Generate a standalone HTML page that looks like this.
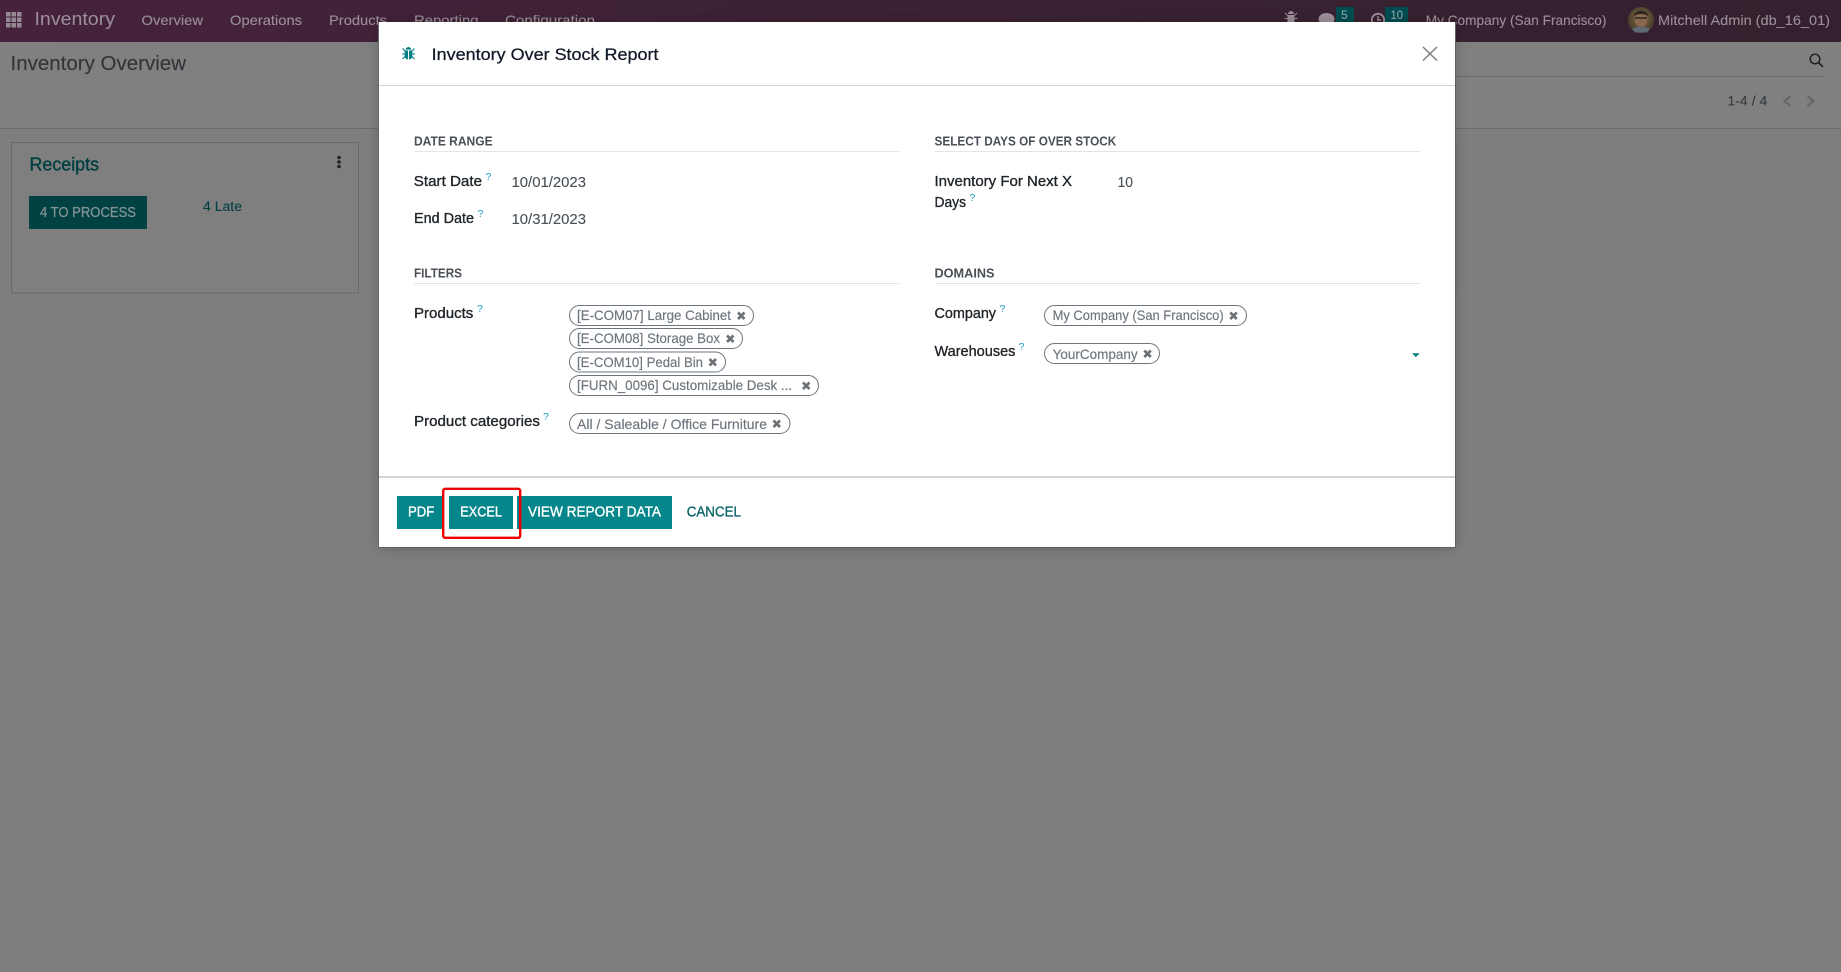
<!DOCTYPE html>
<html>
<head>
<meta charset="utf-8">
<title>Inventory Over Stock Report</title>
<style>
html,body{margin:0;padding:0;background:#7e7e7e;width:1841px;height:972px;overflow:hidden}
svg{display:block}
text{font-family:"Liberation Sans",sans-serif}
.menu{font-size:14px;fill:#9c8f99;stroke:#9c8f99;stroke-width:.1px}
.sec{font-size:13px;font-weight:bold;fill:#495057}
.lab{font-size:15px;fill:#1f2429;stroke:#1f2429;stroke-width:.35px}
.val{font-size:14.5px;fill:#495057;stroke:#495057;stroke-width:.1px}
.q{font-size:10.5px;fill:#1a9fc2}
.pt{font-size:14px;fill:#6c757d;stroke:#6c757d;stroke-width:.15px}
.pill{fill:#fff;stroke:#6c757d;stroke-width:1}
.x{stroke:#6c7278;stroke-width:2.700;fill:none}
.btn{font-size:14.5px;fill:#fff;stroke:#fff;stroke-width:.35px}
</style>
</head>
<body>
<svg width="1841" height="972" viewBox="0 0 1841 972" xmlns="http://www.w3.org/2000/svg">
<defs>
<linearGradient id="nav" x1="0" x2="1" y1="0" y2="0"><stop offset="0" stop-color="#46223c"/><stop offset=".45" stop-color="#3c2234"/><stop offset="1" stop-color="#34202e"/></linearGradient>
<radialGradient id="av" cx=".5" cy=".45" r=".55"><stop offset="0" stop-color="#8a6a50"/><stop offset=".6" stop-color="#5d4e36"/><stop offset="1" stop-color="#453d2c"/></radialGradient>
<filter id="sh" x="-5%" y="-10%" width="110%" height="120%"><feDropShadow dx="0" dy="1" stdDeviation="7" flood-color="#000" flood-opacity=".22"/></filter>
</defs>

<rect width="1841" height="972" fill="#7e7e7e"/>
<rect y="42" width="1841" height="86" fill="#808080"/>
<rect width="1841" height="42" fill="url(#nav)"/>

<g fill="#958893">
<rect x="6" y="12" width="4.5" height="4.5"/><rect x="11.500" y="12" width="4.5" height="4.5"/><rect x="17" y="12" width="4.5" height="4.5"/>
<rect x="6" y="17.500" width="4.5" height="4.5"/><rect x="11.500" y="17.500" width="4.5" height="4.5"/><rect x="17" y="17.500" width="4.5" height="4.5"/>
<rect x="6" y="23" width="4.5" height="4.5"/><rect x="11.500" y="23" width="4.5" height="4.5"/><rect x="17" y="23" width="4.5" height="4.5"/>
</g>
<text x="34.500" y="25" font-size="18" fill="#9c8f99" textLength="80.500" lengthAdjust="spacingAndGlyphs">Inventory</text>
<text class="menu" x="141.500" y="25" textLength="61.500" lengthAdjust="spacingAndGlyphs">Overview</text>
<text class="menu" x="230" y="25" textLength="72" lengthAdjust="spacingAndGlyphs">Operations</text>
<text class="menu" x="329" y="25" textLength="58" lengthAdjust="spacingAndGlyphs">Products</text>
<text class="menu" x="414" y="25" textLength="64.500" lengthAdjust="spacingAndGlyphs">Reporting</text>
<text class="menu" x="505" y="25" textLength="90" lengthAdjust="spacingAndGlyphs">Configuration</text>

<g fill="#9c8f99">
<path d="M1291 11a3 3 0 0 1 3 3h-6a3 3 0 0 1 3-3zM1287.500 15h7v6a3.500 3.500 0 0 1-7 0z"/>
<path d="M1285 13l3 3M1297 13l-3 3M1284.500 18.500h3M1297.500 18.500h-3M1285 24l3-2M1297 24l-3-2" stroke="#9c8f99" stroke-width="1" fill="none"/>
<ellipse cx="1326.500" cy="19" rx="8" ry="6"/>
<circle cx="1378" cy="20" r="6.200" fill="none" stroke="#9c8f99" stroke-width="1.800"/>
<path d="M1378 16v4h3" stroke="#9c8f99" stroke-width="1.400" fill="none"/>
</g>
<rect x="1336" y="7" width="18" height="16" fill="#004c50"/>
<text x="1341" y="19" font-size="12" fill="#98b0b0">5</text>
<rect x="1385" y="7" width="23" height="16" fill="#004c50"/>
<text x="1390.500" y="19" font-size="12" fill="#98b0b0" textLength="12.500" lengthAdjust="spacingAndGlyphs">10</text>
<text class="menu" x="1425.700" y="25" textLength="180.700" lengthAdjust="spacingAndGlyphs">My Company (San Francisco)</text>
<circle cx="1641" cy="20" r="13" fill="url(#av)"/>
<ellipse cx="1641" cy="19" rx="6.500" ry="8" fill="#8c6850"/>
<path d="M1634 14q7-7 14 0l0 2q-7-4-14 0z" fill="#322620"/>
<path d="M1635 18h12" stroke="#2a2624" stroke-width="1.500"/>
<path d="M1632 29q9-5 18 0l-3 3.500h-12z" fill="#5d6870"/>
<text class="menu" x="1658" y="25" textLength="172" lengthAdjust="spacingAndGlyphs">Mitchell Admin (db_16_01)</text>

<text x="10.500" y="70" font-size="20" fill="#32363a" stroke="#32363a" stroke-width=".15" textLength="175.500" lengthAdjust="spacingAndGlyphs">Inventory Overview</text>
<rect x="0" y="128" width="1841" height="1" fill="#6b6b6b"/>
<rect x="1400" y="76" width="423" height="1" fill="#6b6b6b"/>
<circle cx="1815" cy="59" r="4.800" fill="none" stroke="#222" stroke-width="1.500"/>
<path d="M1818.500 62.500l4.500 4.500" stroke="#222" stroke-width="1.800"/>
<text x="1727.400" y="105.300" font-size="14" fill="#343a40" stroke="#343a40" stroke-width=".1" textLength="40" lengthAdjust="spacingAndGlyphs">1-4 / 4</text>
<path d="M1790.500 96l-6 5 6 5" fill="none" stroke="#666" stroke-width="2.200"/>
<path d="M1807.500 96l6 5-6 5" fill="none" stroke="#666" stroke-width="2.200"/>

<rect x="11.500" y="142.500" width="347" height="150.500" fill="#7f7f7f" stroke="#6a6a6a" stroke-width="1"/>
<text x="29.500" y="170.700" font-size="18" fill="#003f42" stroke="#003f42" stroke-width=".4" textLength="69.500" lengthAdjust="spacingAndGlyphs">Receipts</text>
<g fill="#222"><circle cx="339" cy="157.500" r="1.800"/><circle cx="339" cy="162" r="1.800"/><circle cx="339" cy="166.500" r="1.800"/></g>
<rect x="29" y="196" width="118" height="33" fill="#004143"/>
<text x="40" y="217" font-size="14.500" fill="#829292" stroke="#829292" stroke-width=".3" textLength="96" lengthAdjust="spacingAndGlyphs">4 TO PROCESS</text>
<text x="203" y="211" font-size="14" fill="#003f42" stroke="#003f42" stroke-width=".1" textLength="39" lengthAdjust="spacingAndGlyphs">4 Late</text>

<!-- modal -->
<rect x="379" y="22" width="1076" height="525" fill="#fff" filter="url(#sh)"/>
<rect x="378" y="142.500" width="1" height="150.500" fill="#6a6a6a"/>
<rect x="1456.500" y="142.500" width="1" height="150.500" fill="#6a6a6a"/>
<rect x="1455" y="22" width="1" height="526" fill="#5e5e5e"/>
<rect x="378" y="22" width="1" height="526" fill="#6a6a6a"/>
<rect x="379" y="547" width="1076" height="1" fill="#5e5e5e"/>
<rect x="379" y="85" width="1076" height="1" fill="#ced4da"/>

<g fill="#017e84" stroke="none">
<path d="M408.500 47a2.800 2.800 0 0 1 2.800 2.600h-5.600a2.800 2.800 0 0 1 2.800-2.600z"/>
<path d="M404.700 50.500h7.600v6a3.800 3 0 0 1-7.600 0z"/>
</g>
<path d="M408.500 50.500v9" stroke="#fff" stroke-width="1"/>
<path d="M402.500 48.500l2.500 2.500M414.500 48.500l-2.500 2.500M402 54h3M415 54h-3M402.500 59l2.500-2.500M414.500 59l-2.500-2.500" stroke="#017e84" stroke-width="1.100" fill="none"/>
<text x="431.700" y="60" font-size="17" fill="#111827" stroke="#111827" stroke-width=".25" textLength="226.800" lengthAdjust="spacingAndGlyphs">Inventory Over Stock Report</text>
<path d="M1423 47l14 13.500M1437 47l-14 13.500" stroke="#7c7c7c" stroke-width="1.400" fill="none"/>

<!-- sections -->
<text class="sec" x="414" y="145.500" textLength="78.600" lengthAdjust="spacingAndGlyphs">DATE RANGE</text>
<rect x="414" y="151" width="485" height="1" fill="#e2e4e7"/>
<text class="sec" x="934.500" y="145.500" textLength="181.800" lengthAdjust="spacingAndGlyphs">SELECT DAYS OF OVER STOCK</text>
<rect x="935" y="151" width="485" height="1" fill="#e2e4e7"/>
<text class="sec" x="414" y="277.500" textLength="48" lengthAdjust="spacingAndGlyphs">FILTERS</text>
<rect x="414" y="283" width="485" height="1" fill="#e2e4e7"/>
<text class="sec" x="934.500" y="277.500" textLength="60" lengthAdjust="spacingAndGlyphs">DOMAINS</text>
<rect x="935" y="283" width="485" height="1" fill="#e2e4e7"/>

<!-- labels -->
<text class="lab" x="413.800" y="186" textLength="68.200" lengthAdjust="spacingAndGlyphs">Start Date</text>
<text class="q" x="485.500" y="180">?</text>
<text class="val" x="511.500" y="186.800" textLength="74.500" lengthAdjust="spacingAndGlyphs">10/01/2023</text>
<text class="lab" x="414" y="223" textLength="60" lengthAdjust="spacingAndGlyphs">End Date</text>
<text class="q" x="477.500" y="217">?</text>
<text class="val" x="511.500" y="223.800" textLength="74.500" lengthAdjust="spacingAndGlyphs">10/31/2023</text>
<text class="lab" x="934.500" y="186" textLength="137.500" lengthAdjust="spacingAndGlyphs">Inventory For Next X</text>
<text class="lab" x="934.500" y="207" textLength="31.500" lengthAdjust="spacingAndGlyphs">Days</text>
<text class="q" x="969.500" y="201">?</text>
<text class="val" x="1117.500" y="186.800" textLength="15.500" lengthAdjust="spacingAndGlyphs">10</text>
<text class="lab" x="414" y="318" textLength="59.300" lengthAdjust="spacingAndGlyphs">Products</text>
<text class="q" x="477" y="312">?</text>
<text class="lab" x="414" y="426" textLength="126" lengthAdjust="spacingAndGlyphs">Product categories</text>
<text class="q" x="543" y="420">?</text>
<text class="lab" x="934.500" y="318" textLength="61.500" lengthAdjust="spacingAndGlyphs">Company</text>
<text class="q" x="999.500" y="312">?</text>
<text class="lab" x="934.500" y="356" textLength="80.900" lengthAdjust="spacingAndGlyphs">Warehouses</text>
<text class="q" x="1018.500" y="350">?</text>

<!-- pills -->
<rect class="pill" x="569.500" y="305.500" width="184" height="20" rx="10"/>
<text class="pt" x="577" y="320" textLength="154" lengthAdjust="spacingAndGlyphs">[E-COM07] Large Cabinet</text>
<path class="x" d="M738 312.500l6.500 6.500M744.500 312.500l-6.500 6.500"/>

<rect class="pill" x="569.500" y="328.500" width="173" height="20" rx="10"/>
<text class="pt" x="577" y="343" textLength="143" lengthAdjust="spacingAndGlyphs">[E-COM08] Storage Box</text>
<path class="x" d="M727 335.500l6.500 6.500M733.500 335.500l-6.500 6.500"/>

<rect class="pill" x="569.500" y="352" width="156" height="20" rx="10"/>
<text class="pt" x="577" y="367" textLength="126" lengthAdjust="spacingAndGlyphs">[E-COM10] Pedal Bin</text>
<path class="x" d="M709.500 359l6.500 6.500M716 359l-6.500 6.500"/>

<rect class="pill" x="569.500" y="375.500" width="249" height="20" rx="10"/>
<text class="pt" x="577" y="390" textLength="215" lengthAdjust="spacingAndGlyphs">[FURN_0096] Customizable Desk ...</text>
<path class="x" d="M803 382.500l6.500 6.500M809.500 382.500l-6.500 6.500"/>

<rect class="pill" x="569.500" y="413.500" width="220.500" height="20" rx="10"/>
<text class="pt" x="577" y="429" textLength="190" lengthAdjust="spacingAndGlyphs">All / Saleable / Office Furniture</text>
<path class="x" d="M773.500 420.500l6.500 6.500M780 420.500l-6.500 6.500"/>

<rect class="pill" x="1044.500" y="305.500" width="202" height="20" rx="10"/>
<text class="pt" x="1052.600" y="320" textLength="171.100" lengthAdjust="spacingAndGlyphs">My Company (San Francisco)</text>
<path class="x" d="M1230.300 312.500l6.500 6.500M1236.800 312.500l-6.500 6.500"/>

<rect class="pill" x="1044.500" y="343.500" width="115" height="20" rx="10"/>
<text class="pt" x="1052.600" y="359" textLength="85" lengthAdjust="spacingAndGlyphs">YourCompany</text>
<path class="x" d="M1144.300 350.500l6.500 6.500M1150.800 350.500l-6.500 6.500"/>

<path d="M1412 353.300h7.700l-3.850 3.800z" fill="#017e84"/>

<!-- footer -->
<rect x="379" y="476" width="1076" height="2" fill="#ced4da"/>
<rect x="397" y="496" width="46" height="33" fill="#05868a"/>
<rect x="449" y="496" width="64" height="33" fill="#05868a"/>
<rect x="517" y="496" width="155" height="33" fill="#05868a"/>
<text class="btn" x="408" y="516.700" textLength="26.300" lengthAdjust="spacingAndGlyphs">PDF</text>
<text class="btn" x="460.300" y="516.700" textLength="41.700" lengthAdjust="spacingAndGlyphs">EXCEL</text>
<text class="btn" x="528" y="516.700" textLength="133" lengthAdjust="spacingAndGlyphs">VIEW REPORT DATA</text>
<text x="686.700" y="516.700" font-size="14.500" fill="#0b6468" stroke="#0b6468" stroke-width=".35" textLength="54.300" lengthAdjust="spacingAndGlyphs">CANCEL</text>
<rect x="443.200" y="488.800" width="77" height="49" rx="2" fill="none" stroke="#f00000" stroke-width="2.400"/>
</svg>
</body>
</html>
